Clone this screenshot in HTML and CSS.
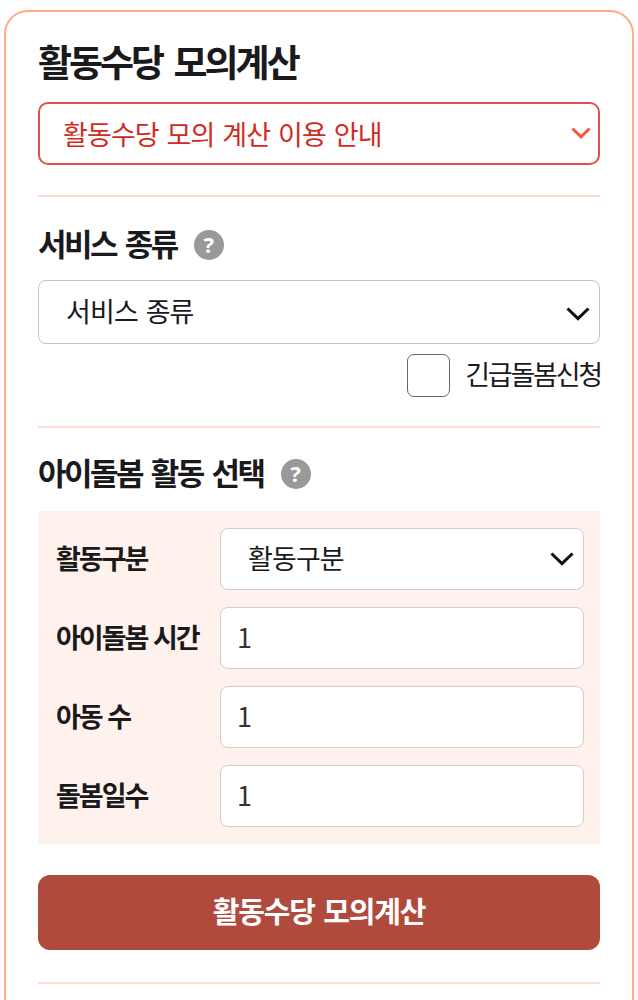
FILE: index.html
```html
<!DOCTYPE html>
<html lang="ko">
<head>
  <meta charset="UTF-8" />
  <meta name="viewport" content="width=device-width, initial-scale=1.0"/>
  <title>활동수당 모의계산</title>
  <link rel="stylesheet" href="styles.css">
</head>
<body>
  <form class="card" id="calcForm">
    <h1>활동수당 모의계산</h1>

    <button type="button" class="guide">
      <span>활동수당 모의 계산 이용 안내</span>
      <svg class="guide-arrow" width="20" height="13" viewBox="0 0 20 13"><path d="M1.5 1.5 L10 10 L18.5 1.5"/></svg>
    </button>

    <hr>

    <div class="heading">
      <h2>서비스 종류</h2>
      <span class="help">?</span>
    </div>
    <div class="select-box service">
      <select id="service" name="service">
        <option>서비스 종류</option>
      </select>
      <svg class="arrow" width="24" height="15" viewBox="0 0 24 15"><path d="M1.5 2 L12 12.2 L22.5 2"/></svg>
    </div>

    <label class="urgent">
      <input type="checkbox" name="urgent">
      <span>긴급돌봄신청</span>
    </label>

    <hr>

    <div class="heading activity">
      <h2>아이돌봄 활동 선택</h2>
      <span class="help">?</span>
    </div>
    <div class="panel">
      <label for="kind">활동구분</label>
      <div class="select-box">
        <select id="kind" name="kind">
          <option>활동구분</option>
        </select>
        <svg class="arrow" width="24" height="15" viewBox="0 0 24 15"><path d="M1.5 2 L12 12.2 L22.5 2"/></svg>
      </div>

      <label for="hours">아이돌봄 시간</label>
      <input type="text" id="hours" name="hours" value="1">

      <label for="children">아동 수</label>
      <input type="text" id="children" name="children" value="1">

      <label for="days">돌봄일수</label>
      <input type="text" id="days" name="days" value="1">
    </div>

    <button type="button" class="submit">활동수당 모의계산</button>

    <hr>
  </form>
</body>
</html>
```
FILE: styles.css
```css
* {
  box-sizing: border-box;
}

body {
  margin: 0;
  height: 1000px;
  overflow: hidden;
  padding: 10px 4px 0;
  background-color: #fff;
  color: #1a1a1c;
  font-family: "Noto Sans CJK KR", "Noto Sans", sans-serif;
}

.card {
  height: 1040px;
  padding: 22px 32px 0;
  border: 2px solid #ffab8c;
  border-radius: 24px;
}

h1 {
  margin: 0 0 14px;
  font-size: 37px;
  line-height: 54px;
  letter-spacing: -3px;
  word-spacing: 4px;
}

h2 {
  margin: 0;
  padding-bottom: 4px;
  font-size: 31px;
  line-height: 42px;
  letter-spacing: -2.5px;
  word-spacing: 2.5px;
}

hr {
  height: 2px;
  margin: 0;
  border: none;
  background-color: #ffdccf;
}

button,
input,
select {
  font-family: inherit;
  color: inherit;
}

.guide {
  display: flex;
  justify-content: space-between;
  align-items: center;
  width: 100%;
  height: 63px;
  margin-bottom: 30px;
  padding: 0 7px 0 23px;
  background-color: #fff;
  border: 2px solid #d9534a;
  border-radius: 10px;
  color: #d22a22;
  font-size: 27px;
  letter-spacing: -0.9px;
  word-spacing: 1.2px;
}

.guide-arrow {
  fill: none;
  stroke: #f9573c;
  stroke-width: 3;
}

.heading {
  display: flex;
  align-items: center;
  gap: 17px;
  margin: 25px 0 12px;
}

.heading.activity {
  margin: 23px 0 14px;
}

.help {
  width: 30px;
  height: 30px;
  border-radius: 50%;
  background-color: #999;
  color: #fff;
  font-family: "Noto Sans", sans-serif;
  font-size: 22px;
  font-weight: bold;
  line-height: 29px;
  text-align: center;
}

.select-box {
  position: relative;
}

select,
input[type="text"] {
  display: block;
  width: 100%;
  height: 62px;
  padding: 0 16px 4px;
  background-color: #fff;
  border: 1px solid #d3cccd;
  border-radius: 8px;
  font-size: 27px;
  letter-spacing: -0.9px;
  appearance: none;
}

input[type="text"] {
  color: #333;
}

select {
  padding: 0 27px 3px;
  word-spacing: 1.2px;
}

.service select {
  height: 64px;
  border-color: #c4c4c8;
}

.arrow {
  position: absolute;
  top: 50%;
  right: 10px;
  transform: translateY(-50%);
  fill: none;
  stroke: #111;
  stroke-width: 3;
}

.service .arrow {
  top: 53%;
}

.urgent {
  display: flex;
  justify-content: flex-end;
  align-items: center;
  gap: 15px;
  margin: 10px 0 29px;
  font-size: 27px;
  line-height: 43px;
  letter-spacing: -2.2px;
}

.urgent span {
  margin-right: -1px;
  padding-bottom: 3px;
  line-height: 40px;
}

.urgent input {
  width: 43px;
  height: 43px;
  margin: 0;
  border: 1px solid #6d666b;
  border-radius: 7px;
  appearance: none;
}

.panel {
  display: grid;
  grid-template-columns: 164px 1fr;
  row-gap: 17px;
  align-items: center;
  height: 333px;
  padding: 17px 16px 17px 18px;
  background-color: #fff2ed;
}

.panel label {
  padding-bottom: 3px;
  font-size: 27px;
  font-weight: bold;
  letter-spacing: -2px;
}

.submit {
  display: block;
  width: 100%;
  height: 75px;
  margin: 31px 0 32px;
  padding-bottom: 7px;
  background-color: #b04a3d;
  border: none;
  border-radius: 12px;
  color: #fff;
  font-size: 29px;
  font-weight: bold;
  letter-spacing: -1.2px;
  word-spacing: 1.5px;
}
```
